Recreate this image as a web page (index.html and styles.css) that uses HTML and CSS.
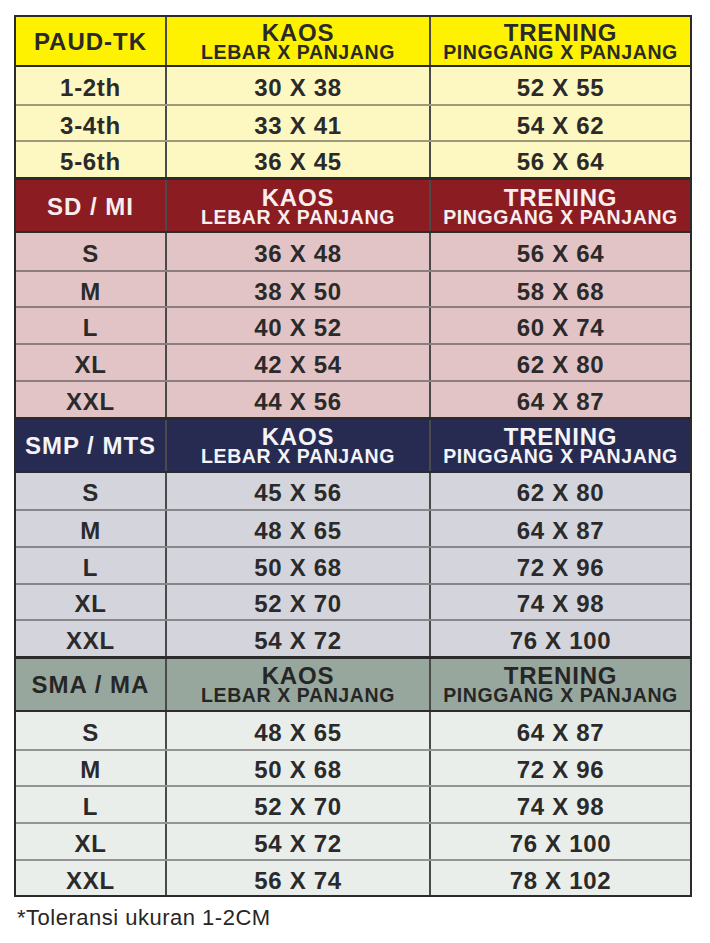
FILE: index.html
```html
<!DOCTYPE html>
<html lang="id">
<head>
<meta charset="utf-8">
<title>Ukuran Kaos &amp; Trening</title>
<link rel="stylesheet" href="styles.css">
</head>
<body>
<div class="chart">
  <section class="group paud">
    <div class="row head">
      <div class="cell lvl"><span>PAUD-TK</span></div>
      <div class="cell"><span class="t1">KAOS</span><span class="t2">LEBAR X PANJANG</span></div>
      <div class="cell"><span class="t1">TRENING</span><span class="t2">PINGGANG X PANJANG</span></div>
    </div>
    <div class="row"><div class="cell">1-2th</div><div class="cell">30 X 38</div><div class="cell">52 X 55</div></div>
    <div class="row"><div class="cell">3-4th</div><div class="cell">33 X 41</div><div class="cell">54 X 62</div></div>
    <div class="row"><div class="cell">5-6th</div><div class="cell">36 X 45</div><div class="cell">56 X 64</div></div>
  </section>
  <section class="group sd">
    <div class="row head">
      <div class="cell lvl"><span>SD / MI</span></div>
      <div class="cell"><span class="t1">KAOS</span><span class="t2">LEBAR X PANJANG</span></div>
      <div class="cell"><span class="t1">TRENING</span><span class="t2">PINGGANG X PANJANG</span></div>
    </div>
    <div class="row"><div class="cell">S</div><div class="cell">36 X 48</div><div class="cell">56 X 64</div></div>
    <div class="row"><div class="cell">M</div><div class="cell">38 X 50</div><div class="cell">58 X 68</div></div>
    <div class="row"><div class="cell">L</div><div class="cell">40 X 52</div><div class="cell">60 X 74</div></div>
    <div class="row"><div class="cell">XL</div><div class="cell">42 X 54</div><div class="cell">62 X 80</div></div>
    <div class="row"><div class="cell">XXL</div><div class="cell">44 X 56</div><div class="cell">64 X 87</div></div>
  </section>
  <section class="group smp">
    <div class="row head">
      <div class="cell lvl"><span>SMP / MTS</span></div>
      <div class="cell"><span class="t1">KAOS</span><span class="t2">LEBAR X PANJANG</span></div>
      <div class="cell"><span class="t1">TRENING</span><span class="t2">PINGGANG X PANJANG</span></div>
    </div>
    <div class="row"><div class="cell">S</div><div class="cell">45 X 56</div><div class="cell">62 X 80</div></div>
    <div class="row"><div class="cell">M</div><div class="cell">48 X 65</div><div class="cell">64 X 87</div></div>
    <div class="row"><div class="cell">L</div><div class="cell">50 X 68</div><div class="cell">72 X 96</div></div>
    <div class="row"><div class="cell">XL</div><div class="cell">52 X 70</div><div class="cell">74 X 98</div></div>
    <div class="row"><div class="cell">XXL</div><div class="cell">54 X 72</div><div class="cell">76 X 100</div></div>
  </section>
  <section class="group sma">
    <div class="row head">
      <div class="cell lvl"><span>SMA / MA</span></div>
      <div class="cell"><span class="t1">KAOS</span><span class="t2">LEBAR X PANJANG</span></div>
      <div class="cell"><span class="t1">TRENING</span><span class="t2">PINGGANG X PANJANG</span></div>
    </div>
    <div class="row"><div class="cell">S</div><div class="cell">48 X 65</div><div class="cell">64 X 87</div></div>
    <div class="row"><div class="cell">M</div><div class="cell">50 X 68</div><div class="cell">72 X 96</div></div>
    <div class="row"><div class="cell">L</div><div class="cell">52 X 70</div><div class="cell">74 X 98</div></div>
    <div class="row"><div class="cell">XL</div><div class="cell">54 X 72</div><div class="cell">76 X 100</div></div>
    <div class="row"><div class="cell">XXL</div><div class="cell">56 X 74</div><div class="cell">78 X 102</div></div>
  </section>
</div>
<p class="note">*Toleransi ukuran 1-2CM</p>
</body>
</html>
```

FILE: styles.css
```css
html, body {
  margin: 0;
  padding: 0;
  background: #ffffff;
}

body {
  padding: 15px 0 0 14px;
  font-family: "Liberation Sans", Arial, sans-serif;
  color: #2a2a2a;
}

.chart {
  width: 678px;
  box-sizing: border-box;
  border: 2px solid #2b2b2b;
}

.group .row {
  display: grid;
  grid-template-columns: 149px 264px 1fr;
  height: 36.7px;
  box-sizing: border-box;
  border-top: 2px solid rgba(40, 40, 40, 0.45);
}

.group .row.head {
  height: 56px;
  border-top: 3px solid #2b2b2b;
  border-bottom: 2px solid #2b2b2b;
}

.group .row.head + .row {
  border-top: none;
}

.paud .row.head {
  height: 50px;
  border-top: none;
}

.cell {
  display: flex;
  align-items: center;
  justify-content: center;
  font-weight: bold;
  font-size: 24px;
  line-height: 24px;
  letter-spacing: 0.7px;
  padding-top: 5px;
  box-sizing: border-box;
  white-space: nowrap;
}

.cell + .cell {
  border-left: 2px solid #4a4a4a;
}

.head .cell {
  flex-direction: column;
  padding-top: 2px;
}

.head .lvl {
  font-size: 24px;
  letter-spacing: 1px;
  padding-top: 2px;
}

.t1 {
  display: block;
  font-size: 24px;
  line-height: 20px;
  letter-spacing: 0.8px;
}

.t2 {
  display: block;
  font-size: 19.5px;
  line-height: 18px;
  letter-spacing: 0.6px;
}

/* PAUD - TK */
.paud .row { background: #fdf7c2; }
.paud .row.head { background: #fff200; }

/* SD / MI */
.sd .row { background: #e2c4c6; }
.sd .row.head { background: #8b1c21; color: #f8eeee; }

/* SMP / MTS */
.smp .row { background: #d4d4dc; }
.smp .row.head { background: #272b52; color: #f4f4f6; }

/* SMA / MA */
.sma .row { background: #e9eeeb; }
.sma .row.head { background: #98a79d; color: #262626; }

.note {
  margin: 8px 0 0 3px;
  font-size: 22px;
  letter-spacing: 0.5px;
  color: #262626;
}
```
